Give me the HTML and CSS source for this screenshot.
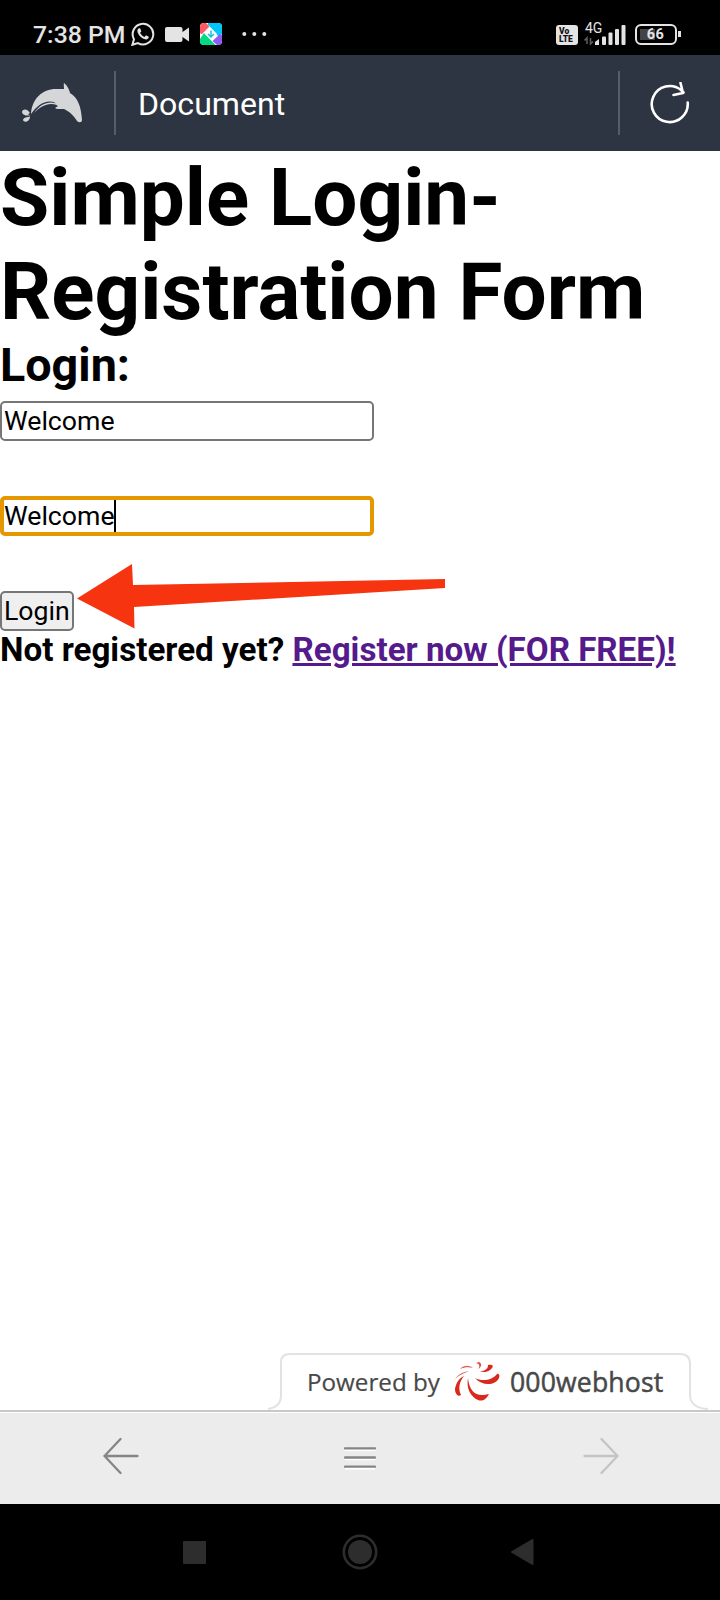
FILE: index.html
```html
<!DOCTYPE html>
<html lang="en">
<head>
<meta charset="utf-8">
<title>Document</title>
<link rel="stylesheet" href="styles.css">
</head>
<body>
<div class="phone">
  <div class="status">
    <span class="time">7:38 PM</span>
    <svg class="whatsapp" width="24" height="24" viewBox="0 0 24 24"><path d="M1.4 22.8 L3 17.2 A10.3 10.3 0 1 1 6.9 21.1 Z" fill="none" stroke="#e4e4e4" stroke-width="2"/><path d="M8.3 6.2 C7.2 6.3 6.3 7.4 6.4 9 C6.7 12.8 10.8 17 14.9 17.4 C16.7 17.4 17.8 16.3 17.8 14.8 L15 13.2 L13.5 14.9 C11.5 14.1 9.9 12.6 9.1 10.7 L10.4 9.2 L9.2 6.4 Z" fill="#e4e4e4"/></svg>
    <svg class="camera" width="25" height="17" viewBox="0 0 25 17"><rect x="0" y="1" width="17.5" height="15" rx="2" fill="#e4e4e4"/><path d="M16 7 L24 1.5 V15.5 L16 10 Z" fill="#e4e4e4"/></svg>
    <svg class="app" width="22" height="22" viewBox="0 0 22 22"><defs><clipPath id="tile"><rect width="22" height="22" rx="4"/></clipPath></defs><g clip-path="url(#tile)"><rect width="22" height="22" fill="#fff"/><path d="M0 0H6L9.500 3.500L1.500 11.500L0 10Z" fill="#ff5967"/><path d="M8 0H22V11L18.500 13.500L8 1.500Z" fill="#00c5f5"/><path d="M22 12V22H17L12.500 18L20 11Z" fill="#8d5cf5"/><path d="M0 16L4 10L15.500 22H0Z" fill="#00dc86"/><path d="M11 5L17 11L11 17L5 11Z" fill="#fff"/><path d="M11 7.500V14M8 11L11 14L14 11" fill="none" stroke="#20bdd8" stroke-width="1.500"/></g></svg>
    <svg class="dots" width="26" height="4" viewBox="0 0 26 4" fill="#e4e4e4"><circle cx="2.300" cy="2" r="2"/><circle cx="12.300" cy="2" r="2"/><circle cx="22.300" cy="2" r="2"/></svg>
    <div class="volte"><span>Vo</span><span>LTE</span></div>
    <div class="signal"><span>4G</span>
      <svg width="42" height="20" viewBox="0 0 42 20"><g fill="#e4e4e4"><path d="M11 20V17L15 14V20Z"/><rect x="18" y="11.5" width="4" height="8.5" rx="1"/><rect x="24.5" y="7.5" width="4" height="12.5" rx="1"/><rect x="31" y="4" width="4" height="16" rx="1"/><rect x="37.5" y="0" width="4" height="20" rx="1"/></g><path d="M3 19V13L.5 15.500M6.500 13V19L9 16.500" fill="none" stroke="#5b5b5b" stroke-width="1.600"/></svg>
    </div>
    <div class="battery"><span>66</span></div>
    <i class="battery-tip"></i>
  </div>
  <header class="bar">
    <svg class="dolphin" width="62" height="42" viewBox="0 0 62 42"><g fill="#d5d6d8"><path d="M9 32 C10 17 20 7 34 7 C38 6.800 41 7 42 7 C42 4 41.500 2 42 1 C45 3 47.500 8 48 11 C56 16 59 24 60 38 C60 40.500 57 41 55 39 C53 35 47 29 42 27 C38 27 35 27.500 33 26 L36 24 C34 23 33 21.500 33 20.500 C24 17 15 23 9 32Z"/><path d="M12 31 C18 22 26 19 33 21 L35 23 C26 20 19 24 12 31Z"/><path d="M8 31 C5 26 1 27 0 29.500 C0 33 4 34 8 33.500 C8 36 2 34 1 38 C2 41 7 40 8 35.500 C6 32 6 32 8 31Z"/></g></svg>
    <i class="rule"></i>
    <span class="title">Document</span>
    <i class="rule right"></i>
    <svg class="reload" width="40" height="44" viewBox="0 0 40 44"><path d="M37.700 20.500 A18 18 0 1 1 31 8 L33.500 10.500 M30.500 1 L33 11 L23.500 13" fill="none" stroke="#fff" stroke-width="2.600" stroke-linecap="round" stroke-linejoin="round"/></svg>
  </header>
  <main class="page">
    <h1>Simple Login-<br>Registration Form</h1>
    <h2>Login:</h2>
    <div class="field">Welcome</div>
    <div class="field focused">Welcome<i class="caret"></i></div>
    <div class="login">Login</div>
    <h4>Not registered yet? <a>Register now (FOR FREE)!</a></h4>
    <svg class="arrow" width="370" height="68" viewBox="0 0 370 68"><path d="M0 35.500 L55 1 L56 22 L368 16 V25 L57 44 L57.500 65.500Z" fill="#f63410"/></svg>
    <div class="powered">
      <svg class="tab" width="450" height="58" viewBox="0 0 450 58"><path d="M0 57 Q13 55 13 43 V10 Q13 2 22 2 H412 Q422 2 422 12 V44 Q423 56 440 57" fill="none" stroke="#e2e2e0" stroke-width="2"/></svg>
      <span class="by">Powered by</span>
      <svg class="swirl" width="46" height="40" viewBox="0 0 46 40"><g fill="#d8291c"><path d="M14 16 C15 28 21 34 30 33 L35 32 C32 38 28 39.500 24 38 C17 35 12 27 14 16Z"/><path d="M21 16 C28 20 39 18 43 12 C45 11 46 14 45 16 C41 24 28 24 21 16Z"/><path d="M26 9 C31 9 34 7 34 3 C38 2 40 4 38 6 C35 10 30 11 26 9Z"/><path d="M10 14 C5 20 4 27 7 33 C5 35 1 33 1 27 C2 21 5 16 10 14Z"/><path d="M15 9 C8 10 3 13 1 18 C4 13 9 12 15 9Z" opacity=".75"/><path d="M19 6 C15 3 10 3 6 7 C11 5 15 5 19 6Z" opacity=".75"/><path d="M24 7 C28 5 28 1 25 0 L22 1 C26 2 26 5 24 7Z" opacity=".8"/></g></svg>
      <span class="host">000webhost</span>
    </div>
  </main>
  <nav class="tools">
    <svg width="36" height="38" viewBox="0 0 36 38"><path d="M34.500 19H1.500M17.500 2L1.500 19L17.500 36" fill="none" stroke="#858585" stroke-width="2.300" stroke-linecap="round"/></svg>
    <svg class="menu" width="32" height="24" viewBox="0 0 32 24"><path d="M1 4H31M1 13.200H31M1 22.400H31" stroke="#fff" stroke-width="2"/><path d="M1 2.300H31M1 11.500H31M1 20.700H31" stroke="#858585" stroke-width="2.300" stroke-linecap="round"/></svg>
    <svg width="36" height="38" viewBox="0 0 36 38"><path d="M1.500 19H34.500M18.500 2L34.500 19L18.500 36" fill="none" stroke="#c4c4c4" stroke-width="2.300" stroke-linecap="round"/></svg>
  </nav>
  <footer class="system">
    <svg width="23" height="23"><rect width="23" height="23" rx="1" fill="#2d2d2d"/></svg>
    <svg class="home" width="36" height="36" viewBox="0 0 36 36"><circle cx="18" cy="18" r="16.200" fill="none" stroke="#2d2d2d" stroke-width="2.600"/><circle cx="18" cy="18" r="12" fill="#2d2d2d"/></svg>
    <svg width="23" height="26" viewBox="0 0 23 26"><path d="M1 13L21.500 1V25Z" fill="#2d2d2d" stroke="#2d2d2d" stroke-width="2" stroke-linejoin="round"/></svg>
  </footer>
</div>
</body>
</html>
```
FILE: styles.css
```css
* { box-sizing: border-box; }
body { margin: 0; font-family: Roboto, "Liberation Sans", sans-serif; color: #000; }
svg { display: block; flex: none; }
.phone { width: 720px; height: 1600px; display: flex; flex-direction: column; overflow: hidden; background: #fff; }
.status { height: 55px; background: #000; display: flex; align-items: flex-start; color: #e4e4e4; flex: none; }
.time { width: 98px; margin: 20px 0 0 33px; font-size: 24.8px; line-height: 30px; font-weight: 500; white-space: nowrap; }
.whatsapp { margin: 22px 0 0 0; }
.camera { margin: 26px 0 0 10px; }
.app { margin: 23px 0 0 10px; }
.dots { margin: 32px 0 0 20px; }
.volte { width: 22px; height: 20px; margin: 25px 0 0 288px; background: #e4e4e4; border-radius: 3px; color: #111; display: flex; flex-direction: column; padding: 2px 0 0 3px; font-size: 8.5px; font-weight: 900; line-height: 8px; }
.signal { width: 42px; margin: 25px 0 0 6px; display: grid; }
.signal span { grid-area: 1 / 1; font-size: 14px; line-height: 14px; margin: -4px 0 0 1px; }
.signal svg { grid-area: 1 / 1; }
.battery { width: 42px; height: 21px; margin: 24px 0 0 9px; border: 2px solid #e4e4e4; border-radius: 6px; padding: 3px; display: flex; }
.battery span { width: 32px; height: 11px; background: linear-gradient(90deg, #444 0 15px, transparent 15px); font-size: 14.5px; line-height: 12px; font-weight: 700; text-align: center; letter-spacing: .5px; padding-right: 1px; }
.battery-tip { width: 3px; height: 6px; margin: 31px 0 0 1px; background: #e4e4e4; }
.bar { height: 96px; background: #2e3542; display: flex; align-items: center; flex: none; }
.dolphin { margin: 0 0 0 22px; }
.rule { width: 2px; height: 64px; margin-left: 30px; background: #575d68; }
.title { margin: 1px 0 0 22px; font-size: 32.1px; line-height: 40px; color: #fff; width: 200px; }
.rule.right { margin-left: 280px; }
.reload { margin: 2px 0 0 30px; }
.page { position: relative; height: 1259px; flex: none; }
h1, h2, h4 { margin: 0; font-weight: 700; white-space: nowrap; }
h1 { font-size: 80px; line-height: 94px; }
h2 { font-size: 46.7px; line-height: 52px; margin-bottom: 10px; }
.field { width: 374px; height: 40px; border: 2px solid #767676; border-radius: 5px; padding: 0 2px; font-size: 26.67px; line-height: 36px; display: flex; align-items: center; margin-bottom: 55px; }
.focused { border: 4px solid #e59700; padding: 0; }
.caret { width: 2px; height: 32px; margin-left: -1px; background: #000; }
.login { width: 74px; height: 40px; border: 2px solid #767676; border-radius: 5px; background: #efefef; font-size: 26.67px; line-height: 36px; padding-left: 2px; }
h4 { font-size: 33.2px; line-height: 38px; }
h4 a { color: #551a8b; text-decoration: underline; }
.arrow { position: absolute; left: 77px; top: 412px; }
.powered { position: absolute; left: 268px; bottom: 0; width: 450px; height: 58px; display: flex; align-items: center; font-family: "Open Sans", "Noto Sans", sans-serif; color: #484848; white-space: nowrap; }
.tab { position: absolute; left: 0; top: 0; }
.by { margin: 1px 0 0 39px; width: 147px; font-size: 24.2px; -webkit-text-stroke: .2px #484848; }
.swirl { margin-top: 2px; }
.host { margin: 2px 0 0 10px; font-size: 26.6px; letter-spacing: .15px; -webkit-text-stroke: .5px #484848; }
.tools { height: 94px; border-top: 2px solid #c8c8c8; box-shadow: inset 0 1px #fff; background: #ececec; display: flex; align-items: center; justify-content: space-between; padding: 0 101px 4px 103px; flex: none; }
.menu { margin: 3px 2px 0 0; }
.system { height: 96px; background: #000; display: flex; align-items: center; justify-content: space-between; padding: 0 186px 0 183px; }
.home { margin-left: 3px; }
```
